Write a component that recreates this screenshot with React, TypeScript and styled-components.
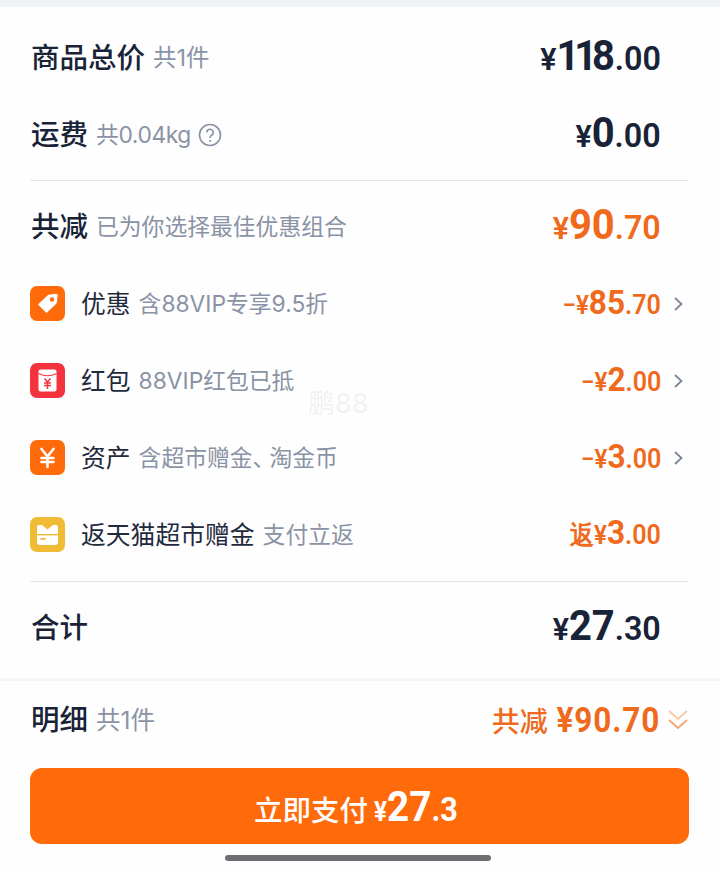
import React from 'react';
import styled, { createGlobalStyle } from 'styled-components';

const GlobalStyle = createGlobalStyle`
  html, body { margin: 0; padding: 0; background: #fff; }
  body { font-family: Inter, "Noto Sans CJK SC", "Noto Sans", sans-serif; }
`;

const ORANGE = '#ef6a1c';
const INK = '#182338';
const PRICE_FONT = `Roboto, "Liberation Sans", sans-serif`;

const Page = styled.div`
  position: relative;
  width: 720px;
  height: 873px;
  overflow: hidden;
  background: #fefefe;
`;
const TopStrip = styled.div`
  height: 7px;
  background: #eff2f6;
`;
const Summary = styled.div`
  padding: 12px 31px 0 30px;
  height: 671px;
  box-sizing: border-box;
`;
const Row = styled.div`
  display: flex;
  align-items: center;
  height: 77px;
`;
const Left = styled.div`
  display: flex;
  align-items: center;
  flex: 1;
  min-width: 0;
`;
const Title = styled.span`
  margin-left: 1px;
  font-size: 28.5px;
  font-weight: 500;
  line-height: 40px;
  color: ${INK};
`;
const Note = styled.span<{ $size?: number; $track?: number }>`
  margin-left: 8px;
  font-size: ${p => p.$size ?? 22.8}px;
  letter-spacing: ${p => p.$track ?? 0}px;
  line-height: 32px;
  color: #8a93a5;
`;
const NarrowComma = styled.span`
  letter-spacing: -6px;
`;
const ItemTitle = styled.span`
  margin-left: 16px;
  font-size: 24.8px;
  line-height: 34px;
  color: #1f2a3d;
`;
const Help = styled.svg`
  margin-left: 7px;
  width: 24px;
  height: 24px;
`;
const Price = styled.div<{ $color: string; $gutter?: number; $squeeze: number }>`
  display: flex;
  align-items: baseline;
  margin-right: ${p => p.$gutter ?? 28}px;
  padding-bottom: 2px;
  font-family: ${PRICE_FONT};
  font-weight: 700;
  color: ${p => p.$color};
  transform: scaleX(${p => p.$squeeze});
  transform-origin: right center;
`;
const Prefix = styled.span<{ $size: number }>`
  font-size: ${p => p.$size}px;
  font-weight: 600;
`;
const Whole = styled.span<{ $size: number; $track?: number }>`
  font-size: ${p => p.$size}px;
  letter-spacing: ${p => p.$track ?? 0}px;
  margin-right: ${p => -(p.$track ?? 0)}px;
  line-height: 1;
`;
const Cents = styled.span<{ $size: number }>`
  font-size: ${p => p.$size}px;
  font-weight: 600;
`;
const Divider = styled.div<{ $before: number; $after: number }>`
  height: 1px;
  margin: ${p => p.$before}px 0 ${p => p.$after}px;
  background: #e4e6ea;
`;
const IconBox = styled.div<{ $bg: string }>`
  display: flex;
  align-items: center;
  justify-content: center;
  flex: none;
  width: 35px;
  height: 35px;
  border-radius: 7px;
  background: ${p => p.$bg};
`;
const Chevron = styled.svg`
  flex: none;
  width: 12px;
  height: 16px;
  margin-right: 5px;
`;
const Footer = styled.div`
  border-top: 3px solid #f4f5f7;
  padding: 0 31px 0 30px;
`;
const DetailRow = styled.div`
  display: flex;
  align-items: center;
  height: 78px;
  margin-bottom: 9px;
`;
const DetailTotal = styled.div`
  display: flex;
  align-items: center;
  color: ${ORANGE};
`;
const DetailLabel = styled.span`
  font-size: 28px;
  font-weight: 500;
  margin-right: 8px;
`;
const DetailPrice = styled.span`
  display: inline-block;
  font-family: ${PRICE_FONT};
  font-size: 35px;
  font-weight: 700;
  letter-spacing: 1px;
  margin-left: -11px;
  transform: scaleX(0.9);
  transform-origin: right center;
`;
const DoubleChevron = styled.svg`
  flex: none;
  width: 22px;
  height: 22px;
  margin-left: 7px;
`;
const PayButton = styled.div`
  display: flex;
  align-items: baseline;
  padding-left: 224px;
  height: 76px;
  line-height: 76px;
  border-radius: 12px;
  background: #ff6a0a;
  color: #fff;
`;
const PayLabel = styled.span`
  font-size: 28.5px;
  font-weight: 500;
  margin-right: 6px;
`;
const PayAmount = styled.span`
  font-family: ${PRICE_FONT};
  font-weight: 700;
  transform: scaleX(0.9);
  transform-origin: left center;
`;
const PayPart = styled.span<{ $size: number }>`
  font-size: ${p => p.$size}px;
`;
const HomeBar = styled.div`
  width: 266px;
  height: 6px;
  margin: 11px 0 0 195px;
  border-radius: 3px;
  background: #6d6e72;
`;
const Watermark = styled.div`
  position: absolute;
  left: 308px;
  top: 388px;
  font-size: 27px;
  line-height: 32px;
  color: rgba(120, 125, 135, 0.1);
`;

const Amount: React.FC<{ prefix: string; whole: string; cents: string; color: string; big?: boolean; gutter?: number; track?: number }> = ({
  prefix, whole, cents, color, big, gutter, track,
}) => (
  <Price $color={color} $gutter={gutter} $squeeze={big ? 0.95 : 0.93}>
    <Prefix $size={big ? 32 : 26}>{prefix}</Prefix>
    <Whole $size={big ? 42 : 34} $track={track}>{whole}</Whole>
    <Cents $size={big ? 34 : 27}>{cents}</Cents>
  </Price>
);

const TagIcon = () => (
  <svg width="25" height="25" viewBox="0 0 25 25">
    <path d="M13.5 4.5 L21 3.5 Q22 3.5 22 4.5 L21 12 L11.5 21 L4 13.5 Z" fill="#fff" strokeLinejoin="round" stroke="#fff" strokeWidth="1.5" />
    <circle cx="17" cy="8.5" r="2.2" fill="#ff6a0a" />
  </svg>
);
const RedPacketIcon = () => (
  <svg width="25" height="25" viewBox="0 0 25 25">
    <rect x="3.5" y="1.5" width="18" height="22" rx="2" fill="#fff" />
    <path d="M3.5 5.5 Q12.5 10 21.5 5.5" fill="none" stroke="#f5333f" strokeWidth="1.1" />
    <path d="M9.5 10.5 L12.5 14 L15.5 10.5 M9 15 H16 M9 17.5 H16 M12.5 14 V21" fill="none" stroke="#f5333f" strokeWidth="1.5" />
  </svg>
);
const YenIcon = () => (
  <svg width="25" height="25" viewBox="0 0 25 25">
    <path d="M6.5 4 L12.5 11.5 L18.5 4 M6.5 13 H18.5 M6.5 17 H18.5 M12.5 11.5 V22" fill="none" stroke="#fff" strokeWidth="2.6" strokeLinecap="round" />
  </svg>
);
const CouponIcon = () => (
  <svg width="25" height="25" viewBox="0 0 25 25">
    <path d="M2 5 Q2 3 4 3 L7 3 L12.5 7.5 L18 3 L21 3 Q23 3 23 5 L23 20 Q23 23 20 23 L5 23 Q2 23 2 20 Z" fill="#fff" />
    <rect x="2" y="12" width="21" height="1.4" fill="#f0bb35" />
    <rect x="5.5" y="16" width="5" height="1.8" fill="#f0bb35" />
  </svg>
);
const ChevronRight = () => (
  <Chevron viewBox="0 0 12 16">
    <path d="M3 2 L9.5 8 L3 14" fill="none" stroke="#7c8598" strokeWidth="1.8" />
  </Chevron>
);

const App: React.FC = () => (
  <Page>
    <GlobalStyle />
    <TopStrip />
    <Summary>
      <Row>
        <Left>
          <Title>商品总价</Title>
          <Note $size={23.4}>共1件</Note>
        </Left>
        <Amount prefix="¥" whole="118" cents=".00" color={INK} big track={-5.5} />
      </Row>
      <Row>
        <Left>
          <Title>运费</Title>
          <Note $track={-0.4}>共0.04kg</Note>
          <Help viewBox="0 0 24 24">
            <circle cx="12" cy="12" r="10.5" fill="none" stroke="#8a93a5" strokeWidth="1.6" />
            <path d="M8.8 9.5 A3.2 3.2 0 1 1 13.5 12.3 Q12 13.2 12 15" fill="none" stroke="#8a93a5" strokeWidth="1.6" />
            <circle cx="12" cy="18" r="1.1" fill="#8a93a5" />
          </Help>
        </Left>
        <Amount prefix="¥" whole="0" cents=".00" color={INK} big />
      </Row>
      <Divider $before={7} $after={7} />
      <Row>
        <Left>
          <Title>共减</Title>
          <Note>已为你选择最佳优惠组合</Note>
        </Left>
        <Amount prefix="¥" whole="90" cents=".70" color={ORANGE} big />
      </Row>
      <Row>
        <Left>
          <IconBox $bg="#ff6a0a"><TagIcon /></IconBox>
          <ItemTitle>优惠</ItemTitle>
          <Note>含88VIP专享9.5折</Note>
        </Left>
        <Amount prefix="−¥" whole="85" cents=".70" color={ORANGE} gutter={11} />
        <ChevronRight />
      </Row>
      <Row>
        <Left>
          <IconBox $bg="#f5333f"><RedPacketIcon /></IconBox>
          <ItemTitle>红包</ItemTitle>
          <Note>88VIP红包已抵</Note>
        </Left>
        <Amount prefix="−¥" whole="2" cents=".00" color={ORANGE} gutter={11} />
        <ChevronRight />
      </Row>
      <Row>
        <Left>
          <IconBox $bg="#ff6a0a"><YenIcon /></IconBox>
          <ItemTitle>资产</ItemTitle>
          <Note>含超市赠金<NarrowComma>、</NarrowComma>淘金币</Note>
        </Left>
        <Amount prefix="−¥" whole="3" cents=".00" color={ORANGE} gutter={11} />
        <ChevronRight />
      </Row>
      <Row>
        <Left>
          <IconBox $bg="#f0bb35"><CouponIcon /></IconBox>
          <ItemTitle>返天猫超市赠金</ItemTitle>
          <Note>支付立返</Note>
        </Left>
        <Amount prefix="返¥" whole="3" cents=".00" color={ORANGE} />
      </Row>
      <Divider $before={8} $after={7} />
      <Row>
        <Left>
          <Title>合计</Title>
        </Left>
        <Amount prefix="¥" whole="27" cents=".30" color={INK} big />
      </Row>
    </Summary>
    <Footer>
      <DetailRow>
        <Left>
          <Title>明细</Title>
          <Note $size={24.5}>共1件</Note>
        </Left>
        <DetailTotal>
          <DetailLabel>共减</DetailLabel>
          <DetailPrice>¥90.70</DetailPrice>
          <DoubleChevron viewBox="0 0 22 22">
            <path d="M2 2 L11 10 L20 2" fill="none" stroke="#f7c9ab" strokeWidth="2" />
            <path d="M2 11 L11 19 L20 11" fill="none" stroke="#f4a878" strokeWidth="2" />
          </DoubleChevron>
        </DetailTotal>
      </DetailRow>
      <PayButton>
        <PayLabel>立即支付</PayLabel>
        <PayAmount>
          <PayPart $size={27}>¥</PayPart>
          <PayPart $size={43}>27</PayPart>
          <PayPart $size={34}>.3</PayPart>
        </PayAmount>
      </PayButton>
      <HomeBar />
    </Footer>
    <Watermark>鹏88</Watermark>
  </Page>
);

export default App;
